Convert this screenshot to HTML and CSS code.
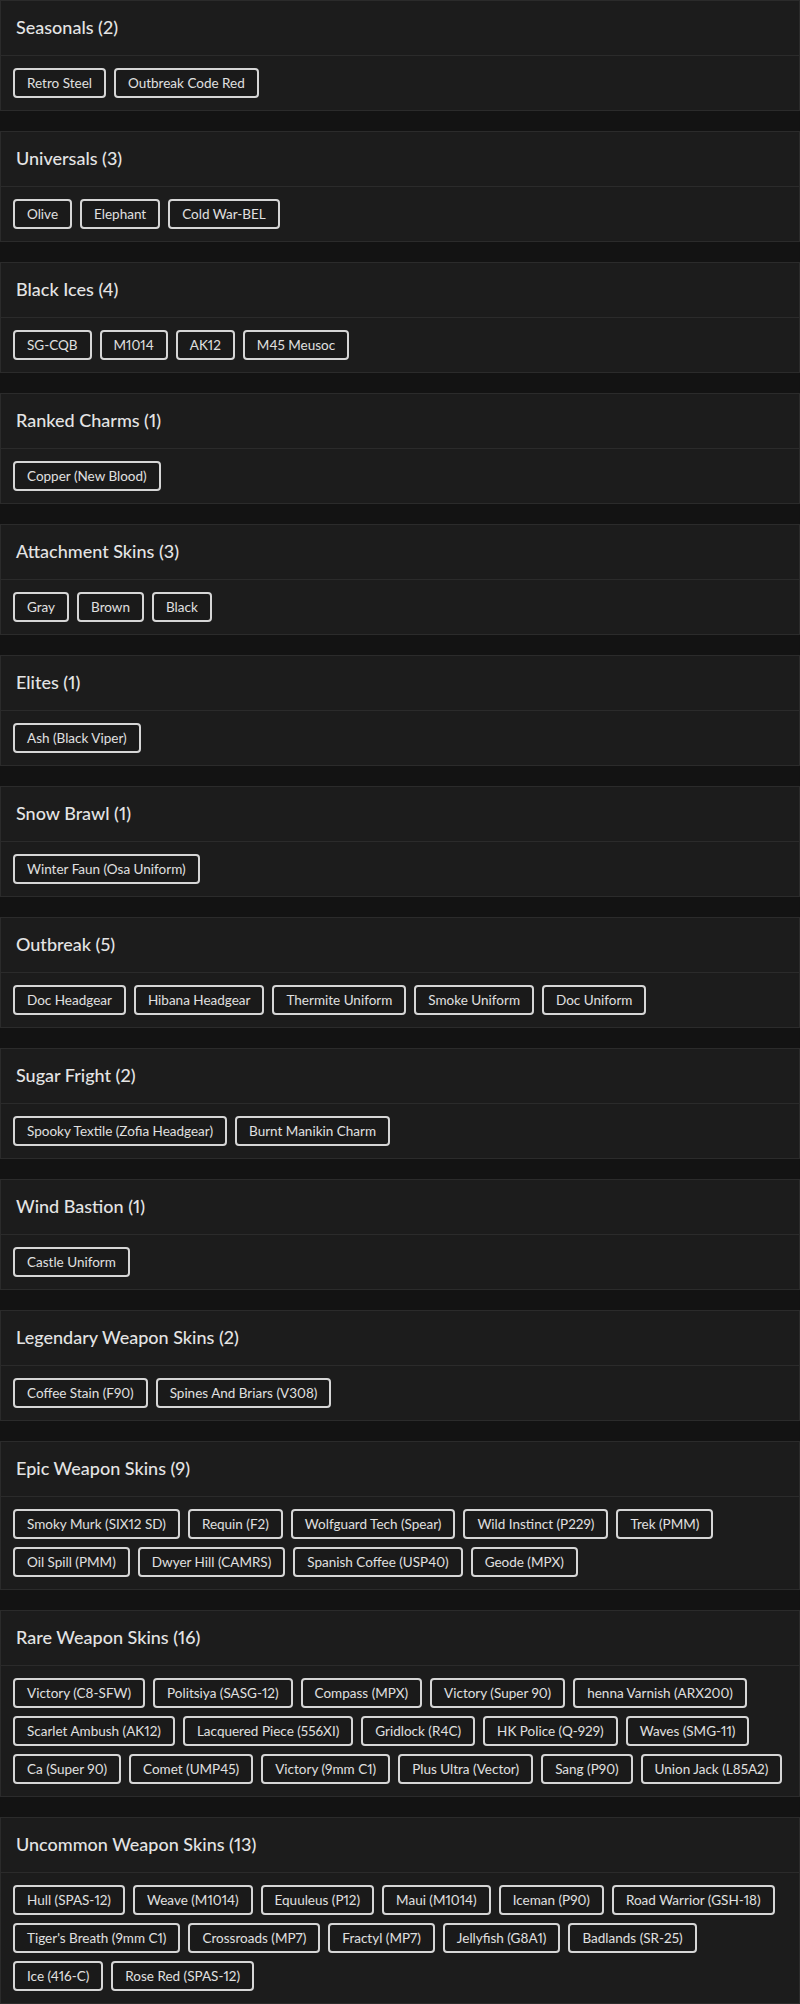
FILE: index.html
```html
<!DOCTYPE html>
<html>
<head>
<meta charset="utf-8">
<link rel="stylesheet" href="styles.css">
</head>
<body>
<main class="list">
  <section class="card"><h2 class="card-title">Seasonals (2)</h2><div class="tags"><span class="tag">Retro Steel</span><span class="tag">Outbreak Code Red</span></div></section>
  <section class="card"><h2 class="card-title">Universals (3)</h2><div class="tags"><span class="tag">Olive</span><span class="tag">Elephant</span><span class="tag">Cold War-BEL</span></div></section>
  <section class="card"><h2 class="card-title">Black Ices (4)</h2><div class="tags"><span class="tag">SG-CQB</span><span class="tag">M1014</span><span class="tag">AK12</span><span class="tag">M45 Meusoc</span></div></section>
  <section class="card"><h2 class="card-title">Ranked Charms (1)</h2><div class="tags"><span class="tag">Copper (New Blood)</span></div></section>
  <section class="card"><h2 class="card-title">Attachment Skins (3)</h2><div class="tags"><span class="tag">Gray</span><span class="tag">Brown</span><span class="tag">Black</span></div></section>
  <section class="card"><h2 class="card-title">Elites (1)</h2><div class="tags"><span class="tag">Ash (Black Viper)</span></div></section>
  <section class="card"><h2 class="card-title">Snow Brawl (1)</h2><div class="tags"><span class="tag">Winter Faun (Osa Uniform)</span></div></section>
  <section class="card"><h2 class="card-title">Outbreak (5)</h2><div class="tags"><span class="tag">Doc Headgear</span><span class="tag">Hibana Headgear</span><span class="tag">Thermite Uniform</span><span class="tag">Smoke Uniform</span><span class="tag">Doc Uniform</span></div></section>
  <section class="card"><h2 class="card-title">Sugar Fright (2)</h2><div class="tags"><span class="tag">Spooky Textile (Zofia Headgear)</span><span class="tag">Burnt Manikin Charm</span></div></section>
  <section class="card"><h2 class="card-title">Wind Bastion (1)</h2><div class="tags"><span class="tag">Castle Uniform</span></div></section>
  <section class="card"><h2 class="card-title">Legendary Weapon Skins (2)</h2><div class="tags"><span class="tag">Coffee Stain (F90)</span><span class="tag">Spines And Briars (V308)</span></div></section>
  <section class="card"><h2 class="card-title">Epic Weapon Skins (9)</h2><div class="tags"><span class="tag">Smoky Murk (SIX12 SD)</span><span class="tag">Requin (F2)</span><span class="tag">Wolfguard Tech (Spear)</span><span class="tag">Wild Instinct (P229)</span><span class="tag">Trek (PMM)</span><span class="tag">Oil Spill (PMM)</span><span class="tag">Dwyer Hill (CAMRS)</span><span class="tag">Spanish Coffee (USP40)</span><span class="tag">Geode (MPX)</span></div></section>
  <section class="card"><h2 class="card-title">Rare Weapon Skins (16)</h2><div class="tags"><span class="tag">Victory (C8-SFW)</span><span class="tag">Politsiya (SASG-12)</span><span class="tag">Compass (MPX)</span><span class="tag">Victory (Super 90)</span><span class="tag">henna Varnish (ARX200)</span><span class="tag">Scarlet Ambush (AK12)</span><span class="tag">Lacquered Piece (556XI)</span><span class="tag">Gridlock (R4C)</span><span class="tag">HK Police (Q-929)</span><span class="tag">Waves (SMG-11)</span><span class="tag">Ca (Super 90)</span><span class="tag">Comet (UMP45)</span><span class="tag">Victory (9mm C1)</span><span class="tag">Plus Ultra (Vector)</span><span class="tag">Sang (P90)</span><span class="tag">Union Jack (L85A2)</span></div></section>
  <section class="card"><h2 class="card-title">Uncommon Weapon Skins (13)</h2><div class="tags"><span class="tag">Hull (SPAS-12)</span><span class="tag">Weave (M1014)</span><span class="tag">Equuleus (P12)</span><span class="tag">Maui (M1014)</span><span class="tag">Iceman (P90)</span><span class="tag">Road Warrior (GSH-18)</span><span class="tag">Tiger's Breath (9mm C1)</span><span class="tag">Crossroads (MP7)</span><span class="tag">Fractyl (MP7)</span><span class="tag">Jellyfish (G8A1)</span><span class="tag">Badlands (SR-25)</span><span class="tag">Ice (416-C)</span><span class="tag">Rose Red (SPAS-12)</span></div></section>
</main>
</body>
</html>
```
FILE: styles.css
```css
html, body {
  margin: 0;
  padding: 0;
  background: #131313;
}
body {
  font-family: Lato, "Open Sans", sans-serif;
  font-variant-numeric: proportional-nums;
  color: #e2e2e2;
}
.list {
  display: flex;
  flex-direction: column;
  gap: 20px;
}
.card {
  background: #1c1c1c;
  border: 1px solid #2b2b2b;
}
.card-title {
  margin: 0;
  padding: 16px 15px 17px;
  font-size: 18px;
  line-height: 21px;
  font-weight: 500;
  color: #e4e4e4;
  border-bottom: 1px solid #2b2b2b;
}
.tags {
  display: flex;
  flex-wrap: wrap;
  column-gap: 8px;
  row-gap: 8px;
  padding: 12px;
}
.tag {
  display: inline-block;
  border: 2px solid #d6d6d6;
  border-radius: 4px;
  padding: 4px 12px;
  font-size: 13.5px;
  line-height: 18px;
  color: #e0e0e0;
  background: #1a1a1a;
}
```
